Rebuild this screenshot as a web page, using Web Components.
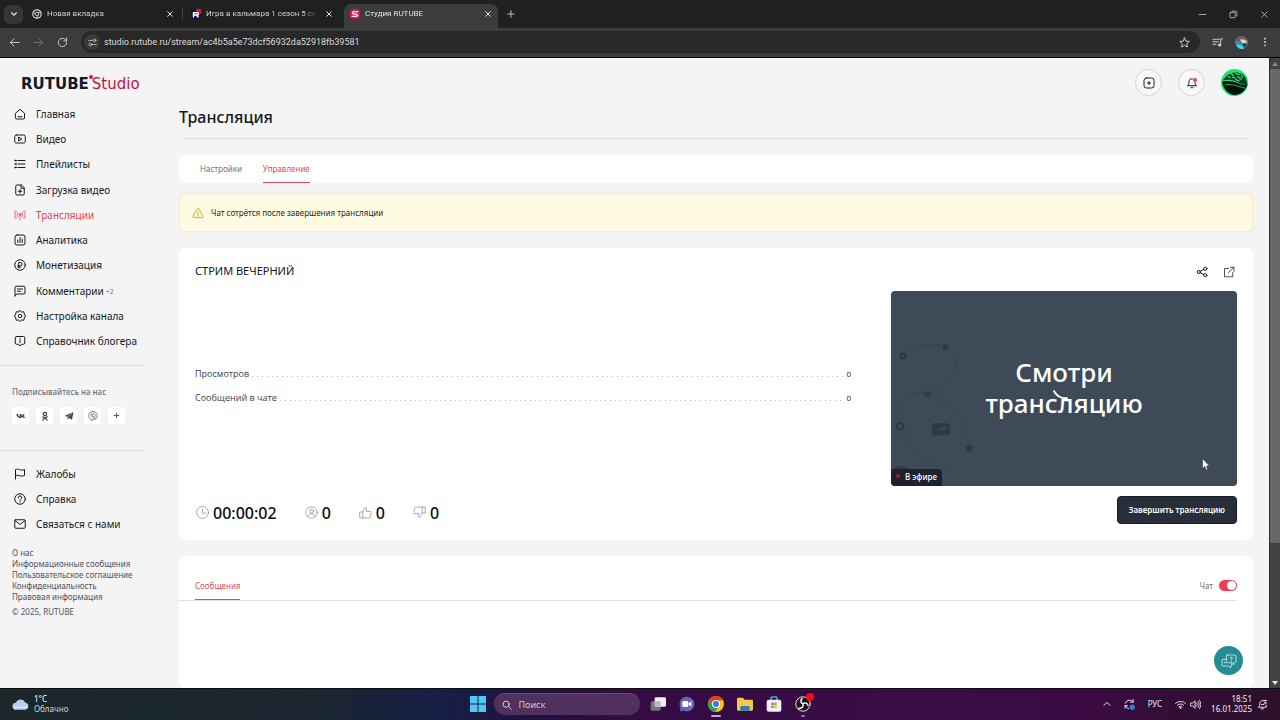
<!DOCTYPE html>
<html lang="ru">
<head>
<meta charset="utf-8">
<title>Студия RUTUBE</title>
<style>
  html, body { margin: 0; height: 100%; }
  body { font-family: "Noto Sans", "Open Sans", sans-serif; color: #14191f; background: #f4f4f4; overflow: hidden; }
</style>
</head>
<body>
<studio-window></studio-window>
<script>
function define(tag, css, html) {
  const template = document.createElement('template');
  template.innerHTML = '<style>*{box-sizing:border-box}button,input{font:inherit;color:inherit;background:none;border:0;padding:0;margin:0}a{color:inherit;text-decoration:none}' + css + '</style>' + (typeof html === 'string' ? html : '');
  customElements.define(tag, class extends HTMLElement {
    constructor() {
      super();
      this.attachShadow({ mode: 'open' }).append(template.content.cloneNode(true));
    }
    connectedCallback() {
      if (typeof html === 'function' && !this.ready) {
        this.ready = true;
        this.shadowRoot.append(document.createRange().createContextualFragment(html(this)));
      }
    }
  });
}

const icons = {
  home: '<path d="M3 10.5 12 2.5l9 8V20a2 2 0 0 1-2 2H5a2 2 0 0 1-2-2z"/><path d="M8 17.5h8"/>',
  video: '<rect x="1.5" y="4" width="21" height="16" rx="3"/><path d="m10 8.5 5.5 3.5-5.5 3.5z"/>',
  list: '<path d="M8 5h14M8 12h14M8 19h14"/><path d="M2 5h2.5M2 12h2.5M2 19h2.5" stroke-width="3"/>',
  upload: '<path d="M14 2H6a2.500 2.500 0 0 0-2.500 2.500v15A2.500 2.500 0 0 0 6 22h12a2.500 2.500 0 0 0 2.500-2.500V8.500z"/><path d="M14 2v6.500h6.500M12 11v7M8.500 14.500h7"/>',
  live: '<circle cx="12" cy="11" r="2"/><path d="M12 13v9M8 15.500a6 6 0 0 1 0-9M16 15.500a6 6 0 0 0 0-9M4.500 18a10 10 0 0 1 0-14M19.500 18a10 10 0 0 0 0-14M1.500 19a13 13 0 0 1 0-16M22.500 19a13 13 0 0 0 0-16" stroke-width="1.500"/>',
  chart: '<rect x="2" y="2" width="20" height="20" rx="4"/><path d="M7.500 17v-5M12 17V7M16.500 17v-7"/>',
  ruble: '<circle cx="12" cy="12" r="10.500"/><path d="M9.500 18V7H13a3.300 3.300 0 0 1 0 6.600H7.500M7.500 16h6"/>',
  comment: '<path d="M2 22V4.500A2 2 0 0 1 4 2.500h16a2 2 0 0 1 2 2V16a2 2 0 0 1-2 2H6z"/><path d="M7 8h10M7 12.500h6"/>',
  gear: '<path d="m12 1 3.200 3 4.500-.5.800 4.500L23 12l-2.500 4-.8 4.500-4.500-.5L12 23l-3.200-3-4.500.5L3.500 16 1 12l2.500-4 .8-4.500 4.500.5z"/><circle cx="12" cy="12" r="3.500"/>',
  info: '<path d="M5 3h14a2.500 2.500 0 0 1 2.500 2.500V16a2.500 2.500 0 0 1-2.500 2.500h-4L12 22l-3-3.500H5A2.500 2.500 0 0 1 2.500 16V5.500A2.500 2.500 0 0 1 5 3z"/><path d="M12 10v5M12 6.500v1"/>',
  flag: '<path d="M3 22V3c6-3 10 4 18 0v12c-8 4-12-3-18 0"/>',
  help: '<circle cx="12" cy="12" r="10.500"/><path d="M8.500 9.500a3.500 3.500 0 1 1 5 3c-1 .5-1.500 1-1.500 2M12 17v1"/>',
  mail: '<rect x="1.500" y="3.500" width="21" height="17" rx="2"/><path d="m2 5 10 8 10-8"/>',
  vk: '<path d="M1 7h4c.5 4 2 6 4 7V7h4v4c2-.5 3-2 4-4h4c-.6 2.500-2 4-3.500 5 2 1 3.500 2.500 4.500 5h-4.200c-.8-2-2.500-3.200-4.800-3.500V17h-1.500C5 17 1.200 13.500 1 7z" fill="currentColor" stroke="none"/>',
  ok: '<circle cx="12" cy="7" r="4" stroke-width="3"/><path d="M6.500 14c3.500 2.500 7.500 2.500 11 0M12 16l-5 6M12 16l5 6" stroke-width="3"/>',
  telegram: '<path d="M1 12 23 2.500 19 21l-7-4.500-3.500 4V14z" fill="currentColor" stroke="none"/><path d="m8.500 14.500 10-8" stroke="#fff" stroke-width="1"/>',
  viber: '<path d="M12 1.500c7 0 10 2.500 10 9.500s-3 9.500-9.500 9.500L8 23.500v-3.700C4 18.500 2 16 2 11 2 4 5 1.500 12 1.500z" stroke-width="1.500"/><path d="M8 6.500c-4 3 3 11 7.500 11 2 0 3-2.500 1-3.500l-2.500-1c-1.500 2-4.500-1.500-3-3zM13 6c3 0 4.500 2 4.500 4.500" stroke-width="1.500"/>',
  plus: '<path d="M12 4v16M4 12h16"/>',
  create: '<rect x="2" y="2" width="20" height="20" rx="5"/><path d="M12 9v6M9 12h6"/>',
  bell: '<path d="M13 3.500C8 3 6 6 6 10c0 4-1 5.500-3 7.500h18c-2-2-3-3.500-3-6.500M9.500 20.500c1 2 4 2 5 0"/><circle cx="18" cy="6" r="4" fill="#e8405c" stroke="none"/>',
  warn: '<path d="M10.500 3.500a1.700 1.700 0 0 1 3 0l8.800 15.300a1.600 1.600 0 0 1-1.500 2.400H3.200a1.600 1.600 0 0 1-1.500-2.400z"/><path d="M12 9v6M12 17v1.500"/>',
  share: '<circle cx="5.500" cy="12" r="3.200"/><circle cx="18.500" cy="5.500" r="3.200"/><circle cx="18.500" cy="18.500" r="3.200"/><path d="m8.500 10.500 7-3.500M8.500 13.500l7 3.500"/>',
  external: '<path d="M11 5H3v16.500h16.500V13M14 2.500h8v8M22 2.500 11 13" stroke-width="1.500"/>',
  clock: '<circle cx="12" cy="12" r="11"/><path d="M12 6v7h6"/>',
  user: '<circle cx="12" cy="12" r="10.500"/><circle cx="12" cy="9.500" r="3.500"/><path d="M5 19.500c1-7 13-7 14 0"/>',
  like: '<path d="M2 11h5v11H2zM7 11l4.500-8.500c2.500 0 3 1.500 2.500 3.500l-1 4h7.500A2 2 0 0 1 22.500 12L21 20a2.500 2.500 0 0 1-2.500 2H7"/>',
  dislike: '<path d="M22 13h-5V2h5zM17 13l-4.500 8.500c-2.500 0-3-1.500-2.500-3.500l1-4H3.500A2 2 0 0 1 1.500 12L3 4a2.500 2.500 0 0 1 2.500-2H17"/>',
  chats: '<path d="M9.500 3H21a1.500 1.500 0 0 1 1.500 1.500V13a1.500 1.500 0 0 1-1.500 1.500h-2V18l-3.500-3.500h-6A1.500 1.500 0 0 1 8 13V4.500A1.500 1.500 0 0 1 9.500 3z"/><path d="M8 9.500H3A1.500 1.500 0 0 0 1.500 11v7A1.500 1.500 0 0 0 3 19.500h8l3.500 3v-3a1.500 1.500 0 0 0 1.500-1.500v-3M14 7.500a1.500 1.500 0 1 1 1.500 1.500M15.500 11v1M5 14.500h2"/>',
  down: '<path d="m5 8.500 7 7 7-7"/>',
  up: '<path d="m3 16 9-9 9 9"/>',
  close: '<path d="m5 5 14 14M19 5 5 19"/>',
  back: '<path d="M22 12H3M11 4l-8 8 8 8"/>',
  forward: '<path d="M2 12h19M13 4l8 8-8 8"/>',
  reload: '<path d="M21 12a9 9 0 1 1-3-6.700L21 8M21 2v6.500h-6.500"/>',
  tune: '<path d="M2 6.500h10M12 17.500h10"/><circle cx="17.500" cy="6.500" r="3.500"/><circle cx="6.500" cy="17.500" r="3.500"/>',
  star: '<path d="m12 2 3 7 7.500.6-5.700 5 1.700 7.400L12 18l-6.500 4 1.700-7.400-5.700-5L9 9z"/>',
  music: '<path d="M2 5h14M2 10.500h12M2 16h7M19 17V4h4"/><circle cx="16.500" cy="17.500" r="2.500" fill="currentColor"/>',
  dots: '<g fill="currentColor" stroke="none"><circle cx="12" cy="4" r="2.300"/><circle cx="12" cy="12" r="2.300"/><circle cx="12" cy="20" r="2.300"/></g>',
  minimize: '<path d="M3 12h18"/>',
  restore: '<rect x="2.500" y="6.500" width="14" height="14" rx="2"/><path d="M8 3h10a3 3 0 0 1 3 3v10"/>',
  search: '<circle cx="10" cy="10" r="7.500"/><path d="m16 16 6.500 6.500"/>',
  sync: '<path d="M3 9a9.500 9.500 0 0 1 17-2.500M20 1v6h-6M10 21a9.500 9.500 0 0 1-7-6M2 20v-5.500h5.500"/><circle cx="18" cy="18" r="6" fill="#2b7fd4" stroke="none"/>',
  wifi: '<path d="M1 9.500a16 16 0 0 1 22 0M5 13.500a10 10 0 0 1 14 0M8.500 17a5 5 0 0 1 7 0"/><circle cx="12" cy="19.500" r="2" fill="currentColor" stroke="none"/>',
  volume: '<path d="M1.500 9h4L11 4v16l-5.500-5h-4zM14.500 8.500a5 5 0 0 1 0 7M17.500 5.500a9 9 0 0 1 0 13M20.500 3a13 13 0 0 1 0 18"/>',
  notify: '<path d="M14 3.500C8 2 6 7 6 11s-1 4.500-3 7h17v-5M9 21.500h5M15 3h6l-6 6h6M10 12h5"/>',
  chrome: '<circle cx="12" cy="12" r="10" stroke-width="3"/><circle cx="12" cy="12" r="4"/><path d="M12 8h9M8.500 14 4 6.500M15.500 14 11 22"/>',
  favR: '<rect width="24" height="24" rx="5" fill="#0d1038" stroke="none"/><path d="M24 0v12C16 12 12 8 12 0z" fill="#e3123f" stroke="none"/><path d="M6 19V9h9a2.500 2.500 0 0 1 0 5.500H6M13 14.500l4 4.500" stroke="#fff" stroke-width="3.500"/>',
  favS: '<rect width="24" height="24" rx="9" fill="#e3124f" stroke="none"/><path d="M19 6.500H9a3 3 0 0 0-3 2.700c0 1.800 1 2.800 3 2.800h6c2 0 3 1 3 2.700a3 3 0 0 1-3 2.800H5" stroke="#fff" stroke-width="3"/>',
  profile: '<g stroke="none"><circle cx="12" cy="12" r="12" fill="#2b8fb6"/><path d="M1 8C5-2 19-2 23 8L12 12z" fill="#7a5a48"/><path d="M9 7c6-3 9 1 14 3l-8 5z" fill="#ecd3bf"/><path d="M3 17c5-3 9 0 14 6-6 3-11 0-14-6z" fill="#4fd0e8"/><path d="m13 13 9 2c-1 3-3 5-5 6z" fill="#283450"/></g>',
  avatar: '<g stroke="none"><circle cx="12" cy="12" r="12" fill="#1be874"/><path d="M4 7c4-5 14-6 18 1l1.500 6c-4 0-7-1-10-3-3-1.500-7-2-12-1z" fill="#0a3d22"/><path d="M1 11c6-1 11 0 15 2 2 1 4 1 7.500 1-1.500 5-6 9-11 9C8 23 2 19 1 11z" fill="#03110a"/></g><path d="M6 6.500l2 1M9 4l2 2M13 4l3 1M10 7.500l3 .5M15 7l3 2M18 5.500l1 2M13 9.500l3 1" stroke="#20e87c" stroke-width="1.100"/><path d="M4 14c6-1 10 1 17 3" stroke="#17a85a" stroke-width="1"/>',
  cloud: '<path d="M6 19.500a5 5 0 0 1-.5-10A7 7 0 0 1 18.500 9a5.300 5.300 0 0 1 0 10.500z" fill="#bccdf3" stroke="none"/><path d="M4 16h17" stroke="#e3eafd" stroke-width="2"/>',
  windows: '<path d="M0 0h11.300v11.300H0zM12.700 0H24v11.300H12.700zM0 12.700h11.300V24H0zM12.700 12.700H24V24H12.700z" fill="#4fc8f5" stroke="none"/>',
  tasks: '<g stroke="none"><rect x="1" y="8" width="15" height="14" rx="2" fill="#77727b"/><rect x="7" y="2" width="17" height="14" rx="2" fill="#f2f0f3"/><path d="M7 8h9v8H7z" fill="#b9b5bb"/></g>',
  teams: '<path d="M12 1a11 11 0 1 1-5 20.800L1.500 23 2 17A11 11 0 0 1 12 1z" fill="#6467b8" stroke="none"/><rect x="5" y="7.500" width="9" height="9" rx="2" fill="#fff" stroke="none"/><path d="m14.500 11 4-3v8l-4-3z" fill="#fff" stroke="none"/>',
  chromeColor: '<g stroke="none"><circle cx="12" cy="12" r="12" fill="#fbc116"/><path d="M1.600 6A12 12 0 0 1 22.400 6L12 7.500 8 14.500z" fill="#e33b2e"/><path d="M1.600 6A12 12 0 0 0 11 24l5.500-9.500h-9z" fill="#2aa24c"/><circle cx="12" cy="12" r="6" fill="#fff"/><circle cx="12" cy="12" r="4.600" fill="#3b78e7"/></g>',
  folder: '<g stroke="none"><path d="M0 4.500A2 2 0 0 1 2 2.500h7l2.500 3H22a2 2 0 0 1 2 2V20a2 2 0 0 1-2 2H2a2 2 0 0 1-2-2z" fill="#f3c84b"/><path d="M5 22v-5a2 2 0 0 1 2-2h10a2 2 0 0 1 2 2v5z" fill="#2c7fb5"/></g>',
  store: '<path d="M7.500 7V3A1.500 1.500 0 0 1 9 1.500h6A1.500 1.500 0 0 1 16.500 3v4" stroke="#3fa9dc" stroke-width="2.500"/><rect x="1" y="5.500" width="22" height="18" rx="3" fill="#eef1f4" stroke="none"/><path d="M8 10h3.500v3.500H8z" fill="#e5512e" stroke="none"/><path d="M12.500 10H16v3.500h-3.500z" fill="#7cb71b" stroke="none"/><path d="M8 14.500h3.500V18H8z" fill="#2b9fe0" stroke="none"/><path d="M12.500 14.500H16V18h-3.500z" fill="#f5b31a" stroke="none"/>',
  obs: '<circle cx="12" cy="12" r="10.800" fill="#17151a" stroke="#e5e3e6" stroke-width="1.500"/><path d="M10.500 4c-3 3-1.500 7 1.500 7.500M19.500 14c-1-4-5-4.500-7.500-2M6 18.500c4 .5 7-2.500 6-6.500" stroke="#f0eef1" stroke-width="2.400"/>'
};

define('ui-icon',
  ':host{display:block;flex:none;width:var(--size,12px);height:var(--size,12px)}svg{display:block;width:100%;height:100%;fill:none;stroke:currentColor;stroke-width:var(--line,2);stroke-linecap:round;stroke-linejoin:round}',
  el => `<svg viewBox="0 0 24 24" aria-hidden="true">${icons[el.getAttribute('name')]}</svg>`);

/* ---------- browser frame ---------- */
define('browser-tab', `
  :host{display:flex;align-items:center;width:154px;height:24px;padding:0 6px 4px;color:#d0d0d0;border-radius:7px 7px 0 0}
  :host([active]){background:#3c3c3c;color:#e2e2e2}
  ui-icon{--size:10px}
  a{flex:1;min-width:0;margin:0 8px 0 5px;overflow:hidden;white-space:nowrap;-webkit-mask-image:linear-gradient(90deg,#000 88%,transparent)}
  button{color:#e0e0e0}button ui-icon{--size:8px;--line:3}`,
  el => `<ui-icon name="${el.getAttribute('icon')}"></ui-icon><a href="#"><slot></slot></a><button aria-label="Закрыть вкладку"><ui-icon name="close"></ui-icon></button>`);

define('browser-frame', `
  :host{display:block;flex:none;font:9px/14px Roboto,"Noto Sans",sans-serif;background:#3c3c3c;border-bottom:1px solid #000;color:#d6d6d6}
  button{display:grid;place-items:center}
  .tabs{display:flex;align-items:center;height:28px;background:#1f211f;padding:0 11px 0 4px;font-size:8px}
  .list{display:flex;align-items:center;align-self:flex-end;gap:2px;margin-left:3px}
  .list hr{width:1px;height:12px;border:0;margin:0 0 4px;background:#444}
  .list hr.off{background:none}
  .search{width:19px;height:19px;border-radius:6px;background:#353635}
  .search ui-icon{--size:8px;--line:4}
  .new{width:26px;height:20px}.new ui-icon{--size:10px}
  .controls{display:flex;gap:22px;margin-left:auto}
  .controls ui-icon{--size:9px}
  .bar{display:flex;align-items:center;height:29px;padding:0 10px 1px 9px}
  .nav{display:flex;gap:13px;margin-right:13px}
  .nav ui-icon{--size:11px}
  .nav button:nth-child(2){color:#777}
  .address{flex:1;display:flex;align-items:center;height:22px;border-radius:11px;background:#282828;padding:0 10px 0 3px}
  .site{width:16px;height:16px;border-radius:8px;background:#3a3a3a}.site ui-icon{--size:9px}
  input{flex:1;min-width:0;margin:0 8px 0 4px;outline:0;color:#dcdcdc}
  .address>button:last-child ui-icon{--size:11px}
  .tools{display:flex;align-items:center;gap:12px;margin-left:12px}.tools ui-icon{--size:11px}
  .tools ui-icon[name=profile]{--size:13px}.tools ui-icon[name=dots]{--size:10px}`,
  `<div class="tabs"><button class="search" aria-label="Поиск вкладок"><ui-icon name="down"></ui-icon></button>
   <div class="list"><browser-tab icon="chrome">Новая вкладка</browser-tab><hr><browser-tab icon="favR">Игра в кальмара 1 сезон 5 сер</browser-tab><hr class="off"><browser-tab icon="favS" active>Студия RUTUBE</browser-tab></div>
   <button class="new" aria-label="Новая вкладка"><ui-icon name="plus"></ui-icon></button>
   <div class="controls"><button aria-label="Свернуть"><ui-icon name="minimize"></ui-icon></button><button aria-label="Восстановить"><ui-icon name="restore"></ui-icon></button><button aria-label="Закрыть"><ui-icon name="close"></ui-icon></button></div></div>
   <div class="bar"><div class="nav"><button aria-label="Назад"><ui-icon name="back"></ui-icon></button><button aria-label="Вперёд"><ui-icon name="forward"></ui-icon></button><button aria-label="Обновить"><ui-icon name="reload"></ui-icon></button></div>
   <div class="address"><button class="site" aria-label="Сведения о сайте"><ui-icon name="tune"></ui-icon></button><input aria-label="Адрес" value="studio.rutube.ru/stream/ac4b5a5e73dcf56932da52918fb39581"><button aria-label="В закладки"><ui-icon name="star"></ui-icon></button></div>
   <div class="tools"><button aria-label="Медиа"><ui-icon name="music"></ui-icon></button><button aria-label="Профиль"><ui-icon name="profile"></ui-icon></button><button aria-label="Меню"><ui-icon name="dots"></ui-icon></button></div></div>`);

/* ---------- sidebar ---------- */
define('nav-item', `
  :host{display:flex;align-items:center}
  :host([active]){color:#ec4256}
  a{display:flex;align-items:center;gap:10px;white-space:nowrap}
  ui-icon{--size:12px}
  small{font-size:7px;color:#ec4256;margin:2px 0 0 -8px}`,
  el => `<a href="#"><ui-icon name="${el.getAttribute('icon')}"></ui-icon><slot></slot>${el.hasAttribute('badge') ? `<small>${el.getAttribute('badge')}</small>` : ''}</a>`);

define('studio-logo', `
  :host{display:block;font:15px/18px "DejaVu Sans",sans-serif}
  a{display:flex;align-items:flex-start}
  b{color:#14172e}span{color:#c01245}
  i{width:4px;height:4px;margin-right:-1px;border-radius:2px;background:#d8123f}`,
  `<a href="#"><b>RUTUBE</b><i></i><span>Studio</span></a>`);

define('studio-sidebar', `
  :host{display:block;flex:none;width:145px;font-size:10px;line-height:14px}
  studio-logo{margin:17px 0 0 21px}
  nav{display:grid;grid-auto-rows:1fr;padding-left:14px}
  .main{height:253px;margin-top:8px}
  .help{height:76px;margin-top:10px}
  hr{border:0;border-top:1px solid #dcdcde;margin:11px 0 0}
  h2{margin:20px 0 0 12px;font-size:8px;line-height:12px;font-weight:500;color:#6b7078}
  .social{display:flex;gap:7px;margin:9px 0 26px 12px}
  .social a{display:grid;place-items:center;width:17px;height:17px;border-radius:3px;background:#fff;color:#43474d}
  .social ui-icon{--size:10px}.social ui-icon[name=plus]{--size:7px;--line:3}
  .legal{display:grid;justify-items:start;margin:10px 0 0 12px;font-size:8px;line-height:11px;color:#4c5260;white-space:nowrap}
  p{margin:4px 0 0}`,
  `<studio-logo></studio-logo>
   <nav class="main" aria-label="Студия"><nav-item icon="home">Главная</nav-item><nav-item icon="video">Видео</nav-item><nav-item icon="list">Плейлисты</nav-item><nav-item icon="upload">Загрузка видео</nav-item><nav-item icon="live" active>Трансляции</nav-item><nav-item icon="chart">Аналитика</nav-item><nav-item icon="ruble">Монетизация</nav-item><nav-item icon="comment" badge="+2">Комментарии</nav-item><nav-item icon="gear">Настройка канала</nav-item><nav-item icon="info">Справочник блогера</nav-item></nav>
   <hr><h2>Подписывайтесь на нас</h2>
   <div class="social"><a href="#" aria-label="ВКонтакте"><ui-icon name="vk"></ui-icon></a><a href="#" aria-label="Одноклассники"><ui-icon name="ok"></ui-icon></a><a href="#" aria-label="Telegram"><ui-icon name="telegram"></ui-icon></a><a href="#" aria-label="Viber"><ui-icon name="viber"></ui-icon></a><a href="#" aria-label="Ещё"><ui-icon name="plus"></ui-icon></a></div>
   <hr><nav class="help" aria-label="Помощь"><nav-item icon="flag">Жалобы</nav-item><nav-item icon="help">Справка</nav-item><nav-item icon="mail">Связаться с нами</nav-item></nav>
   <div class="legal"><a href="#">О нас</a><a href="#">Информационные сообщения</a><a href="#">Пользовательское соглашение</a><a href="#">Конфиденциальность</a><a href="#">Правовая информация</a><p>© 2025, RUTUBE</p></div>`);

/* ---------- main column ---------- */
define('studio-header', `
  :host{display:flex;justify-content:flex-end;gap:16px;padding:11px 5px 0}
  button{display:grid;place-items:center;width:27px;height:27px;border:1px solid #d6d2d4;border-radius:50%;background:#f8f8f8}
  ui-icon{--size:12px}
  .me{border:0;background:none}.me ui-icon{--size:27px}`,
  `<button aria-label="Создать"><ui-icon name="create"></ui-icon></button><button aria-label="Уведомления"><ui-icon name="bell"></ui-icon></button><button class="me" aria-label="Профиль"><ui-icon name="avatar"></ui-icon></button>`);

define('studio-tabs', `
  :host{display:flex;gap:21px;height:28px;padding:0 21px;border-radius:6px;background:#fff;font-size:8px;line-height:27px}
  a{color:#6e747c}
  a[aria-current]{color:#e5475b;border-bottom:1px solid #e5475b}`,
  `<a href="#">Настройки</a><a href="#" aria-current="page">Управление</a>`);

define('notice-bar', `
  :host{display:flex;align-items:center;gap:7px;height:39px;padding:0 12px;border:1px solid #f5ecc0;border-radius:6px;background:#fffbe2;font-size:8px;line-height:12px;color:#24282c}
  ui-icon{--size:12px;color:#e0a62c}`,
  `<ui-icon name="warn"></ui-icon><span><slot></slot></span>`);

define('leader-row', `
  :host{display:flex;align-items:center;gap:3px;font:9px/16px "Open Sans","Noto Sans",sans-serif;color:#3c4148}
  i{flex:1;height:1px;margin-top:5px;background:repeating-linear-gradient(90deg,#b4b7bb 0 1px,transparent 1px 5px)}
  b{font-weight:500;font-size:8px;color:#14191f}`,
  el => `<span><slot></slot></span><i></i><b>${el.getAttribute('value')}</b>`);

define('stat-count', `
  :host{display:flex;align-items:center;gap:4px;font-size:16px;line-height:22px;font-weight:500;color:#090d11}
  ui-icon{--size:13px;--line:1;color:#5b6878}`,
  el => `<ui-icon name="${el.getAttribute('icon')}"></ui-icon><span><slot></slot></span>`);

define('stream-preview', `
  :host{position:relative;display:grid;place-items:center;aspect-ratio:16/9;border-radius:4px;background:#3e4a58;overflow:hidden;color:#fff}
  svg.art{position:absolute;inset:0;width:100%;height:100%}
  p{position:relative;margin:0;text-align:center;font-size:26px;line-height:31px;font-weight:500}
  .live{position:absolute;left:0;bottom:0;display:flex;align-items:center;gap:5px;height:17px;padding:0 5px 2px;border-radius:0 4px 0 4px;background:#1d222b;font-size:8px;line-height:15px;font-weight:500}
  .live i{width:4px;height:4px;border-radius:2px;background:#b01c35}
  .pointer{position:absolute;left:90%;top:86%;width:8px;height:13px}`,
  `<svg class="art" viewBox="0 0 346 194" fill="none" aria-hidden="true">
     <g stroke="#3a4553" stroke-width="1"><path d="M12 65C25 50 45 52 54 56C75 72 65 90 36 103M9 135C2 112 20 96 36 103C62 110 76 130 78 157M9 135C20 160 30 172 62 180"/></g>
     <g stroke="#2d3743" stroke-width="2"><circle cx="12" cy="65" r="2.500"/><circle cx="9" cy="135" r="3.500"/></g>
     <g fill="#303a46"><circle cx="54" cy="56" r="3"/><circle cx="36" cy="103" r="3"/><circle cx="78" cy="157" r="3.500"/><rect x="41" y="132" width="18" height="12" rx="3"/><path d="M0 182q2-7 10-7t12 7v4H0z"/></g>
     <path d="M47 138h6l2-2" stroke="#3f4a57" stroke-width="2"/>
   </svg>
   <p>Смотри<br>трансляцию</p>
   <svg class="art" viewBox="0 0 346 194" fill="none" aria-hidden="true"><path d="M163 100c3 5 7 7.500 13 7" stroke="#fff" stroke-width="2" stroke-linecap="round"/></svg>
   <span class="live"><i></i>В эфире</span>
   <svg class="pointer" viewBox="0 0 8 13" aria-hidden="true"><path d="M.5.5v10l2.300-2 1.500 3.500 1.600-.7-1.500-3.300h3z" fill="#fff" stroke="#222" stroke-width=".5"/></svg>`);

define('stream-card', `
  :host{display:block;padding:11px 16px 16px;border-radius:6px;background:#fff}
  header{display:flex;align-items:center;height:24px;margin-bottom:8px}
  h2{flex:1;margin:0;font-size:11px;line-height:16px;font-weight:400;color:#111519}
  header button{margin:1px 2px 0 13px}
  header ui-icon{--size:12px}
  .body{display:grid;grid-template-columns:656fr 346fr;gap:40px;align-items:center}
  .rows{display:grid;gap:8px;padding-bottom:4px}
  footer{display:flex;align-items:flex-end;justify-content:space-between;margin-top:10px}
  .stats{display:flex;gap:28px;padding-left:1px}
  .end{height:28px;padding:0 11px;border-radius:4px;background:#27303a;border:1px solid #171d24;color:#fff;font-size:8px;line-height:12px;font-weight:600}`,
  `<header><h2>СТРИМ ВЕЧЕРНИЙ</h2><button aria-label="Поделиться"><ui-icon name="share"></ui-icon></button><button aria-label="Открыть"><ui-icon name="external"></ui-icon></button></header>
   <div class="body"><div class="rows"><leader-row value="0">Просмотров</leader-row><leader-row value="0">Сообщений в чате</leader-row></div><stream-preview></stream-preview></div>
   <footer><div class="stats"><stat-count icon="clock">00:00:02</stat-count><stat-count icon="user">0</stat-count><stat-count icon="like">0</stat-count><stat-count icon="dislike">0</stat-count></div><button class="end">Завершить трансляцию</button></footer>`);

define('messages-card', `
  :host{display:block;border-radius:6px;background:#fff;font-size:8px;line-height:27px;padding-top:16px}
  .head{display:flex;justify-content:space-between;margin-right:16px;padding-left:16px;border-bottom:1px solid #dfdfe1}
  a{color:#e5475b;border-bottom:1px solid #e5475b}
  label{display:flex;align-items:center;gap:6px;color:#6e747c}
  input{appearance:none;display:flex;align-items:center;justify-content:flex-end;width:18px;height:11px;padding:1px;border-radius:6px;background:#ee3f55}
  input::after{content:"";width:9px;height:9px;border-radius:50%;background:#fff}`,
  `<div class="head"><a href="#">Сообщения</a><label>Чат <input type="checkbox" role="switch" checked></label></div>`);

define('studio-main', `
  :host{display:flex;flex-direction:column;flex:1;min-width:0;padding:0 16px 0 34px}
  h1{margin:10px 0;font-size:16px;line-height:22px;font-weight:500}
  hr{width:auto;border:0;border-top:1px solid #dcdcde;margin:0 5px 16px}
  notice-bar{margin:10px 0 16px}
  messages-card{flex:1;margin-top:16px}`,
  `<studio-header></studio-header><h1>Трансляция</h1><hr><studio-tabs></studio-tabs><notice-bar>Чат сотрётся после завершения трансляции</notice-bar><stream-card></stream-card><messages-card></messages-card>`);

define('page-scrollbar', `
  :host{display:flex;flex-direction:column;flex:none;width:11px;background:#424242;border-left:1px solid #2c2c2c}
  i{height:11px;display:grid;place-items:center;color:#8a8a8a}
  i::after{content:"";border:3px solid transparent;border-top:0;border-bottom:4px solid}
  i:last-child{color:#eee}i:last-child::after{transform:rotate(180deg)}
  div{flex:1;display:flex}
  b{width:100%;height:78%;background:#686868}`,
  `<i></i><div><b></b></div><i></i>`);

/* ---------- taskbar ---------- */
define('task-bar', `
  :host{display:grid;grid-template-columns:1fr auto 1fr;align-items:center;flex:none;height:32px;padding:0 12px;box-shadow:inset 0 1px #0b0d10;color:#f0eef2;font:8px/10px "Noto Sans",sans-serif;
    background:linear-gradient(90deg,#1b272b 0,#1a2530 25%,#161f45 34%,#20113f 42%,#350b43 50%,#3a0b45 70%,#3b0a42 85%,#2b1029 100%)}
  button{display:flex;align-items:center}
  .weather{gap:5px;text-align:left}.weather ui-icon{--size:17px}
  .weather span{color:#cfd3d6}.weather b{display:block;font-weight:400;color:#fff}
  .apps{display:flex;align-items:center;gap:13px}
  .apps>button ui-icon{--size:16px}
  label{display:flex;align-items:center;gap:7px;width:146px;height:22px;margin:0 -3px 0 -5px;padding:0 8px;border-radius:11px;border-top:1px solid #6d4a78;background:#50305c}
  label ui-icon{--size:10px}
  input{flex:1;min-width:0;outline:0;font-size:9px}
  input::placeholder{color:#d3c8d8;opacity:1}
  .open{position:relative}
  .open::after{content:"";position:absolute;left:3px;right:3px;bottom:-5px;height:2px;border-radius:1px;background:#c7a5d8}
  .idle::after{left:6px;right:6px;background:#8d7c95}
  .rec::before{content:"";position:absolute;top:-3px;right:-3px;width:8px;height:8px;border-radius:4px;background:#ee1111}
  .tray{display:flex;align-items:center;justify-content:flex-end}
  .tray ui-icon{--size:11px}
  .tray button{margin-left:13px}
  .tray .time{display:block;text-align:right;margin-left:10px}
  .tray .net{gap:4px}
  .tray .bell{margin-left:5px}
  .tray ui-icon[name=up]{--size:8px;--line:3}`,
  `<button class="weather"><ui-icon name="cloud"></ui-icon><span><b>1°C</b>Облачно</span></button>
   <div class="apps"><button aria-label="Пуск"><ui-icon name="windows"></ui-icon></button><label><ui-icon name="search"></ui-icon><input type="search" placeholder="Поиск" aria-label="Поиск"></label><button aria-label="Представление задач"><ui-icon name="tasks"></ui-icon></button><button aria-label="Чат"><ui-icon name="teams"></ui-icon></button><button class="open" aria-label="Chrome"><ui-icon name="chromeColor"></ui-icon></button><button aria-label="Проводник"><ui-icon name="folder"></ui-icon></button><button aria-label="Store"><ui-icon name="store"></ui-icon></button><button class="open idle rec" aria-label="OBS"><ui-icon name="obs"></ui-icon></button></div>
   <div class="tray"><button aria-label="Скрытые значки"><ui-icon name="up"></ui-icon></button><button aria-label="Обновления"><ui-icon name="sync"></ui-icon></button><button>РУС</button><button class="net" aria-label="Сеть и звук"><ui-icon name="wifi"></ui-icon><ui-icon name="volume"></ui-icon></button><button class="time">18:51<br>16.01.2025</button><button class="bell" aria-label="Уведомления"><ui-icon name="notify"></ui-icon></button></div>`);

define('studio-window', `
  :host{display:flex;flex-direction:column;height:100vh}
  .view{position:relative;display:flex;flex:1;min-height:0;overflow:hidden;background:#f4f4f4}
  .chat{position:absolute;right:37px;bottom:13px;display:grid;place-items:center;width:29px;height:29px;border-radius:50%;background:#268c92;color:#fff}
  .chat ui-icon{--size:16px;--line:1}`,
  `<browser-frame></browser-frame><div class="view"><studio-sidebar></studio-sidebar><studio-main></studio-main><page-scrollbar></page-scrollbar><button class="chat" aria-label="Чат поддержки"><ui-icon name="chats"></ui-icon></button></div><task-bar></task-bar>`);
</script>
</body>
</html>
